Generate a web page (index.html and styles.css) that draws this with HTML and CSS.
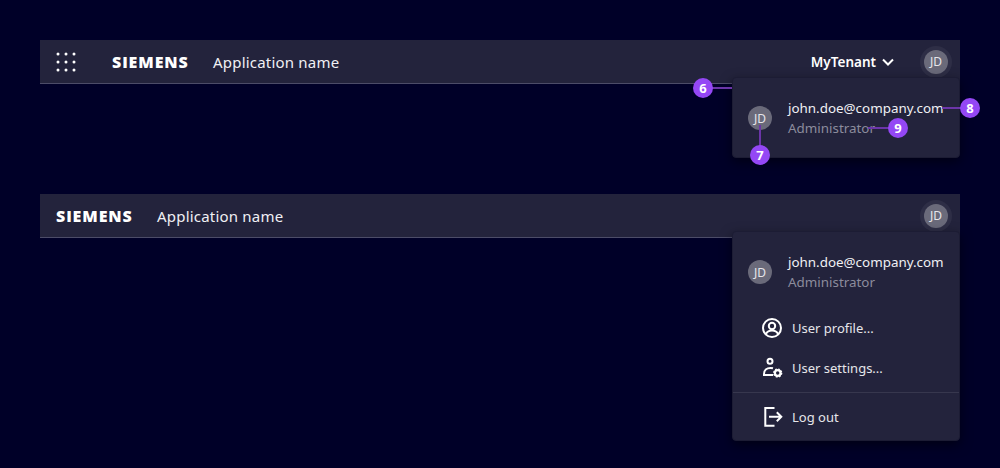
FILE: index.html
```html
<!DOCTYPE html>
<html lang="en">
<head>
    <meta charset="UTF-8">
    <meta name="viewport" content="width=device-width, initial-scale=1.0">
    <title>Application header</title>
    <link rel="stylesheet" href="styles.css">
</head>
<body>
    <section class="app app-first">
        <header class="bar">
            <button class="launcher" aria-label="Launcher">
                <svg width="20" height="20" viewBox="0 0 20 20" fill="#fff">
                    <circle cx="2" cy="2" r="1.5"/><circle cx="10" cy="2" r="1.5"/><circle cx="18" cy="2" r="1.5"/>
                    <circle cx="2" cy="10" r="1.5"/><circle cx="10" cy="10" r="1.5"/><circle cx="18" cy="10" r="1.5"/>
                    <circle cx="2" cy="18" r="1.5"/><circle cx="10" cy="18" r="1.5"/><circle cx="18" cy="18" r="1.5"/>
                </svg>
            </button>
            <span class="logo">SIEMENS</span>
            <span class="app-name">Application name</span>
            <span class="tenant">MyTenant
                <svg width="12" height="8" viewBox="0 0 12 8" fill="none" stroke="#fff" stroke-width="2"><path d="M1 1.500l5 5 5-5"/></svg>
            </span>
            <span class="avatar-ring"><span class="avatar">JD</span></span>
        </header>

        <div class="menu">
            <div class="identity">
                <span class="avatar">JD</span>
                <div class="who">
                    <div class="email">john.doe@company.com</div>
                    <div class="role">Administrator</div>
                </div>
            </div>
        </div>

        <!-- callouts -->
        <span class="line line-6"></span><span class="pin pin-6">6</span>
        <span class="line line-7"></span><span class="pin pin-7">7</span>
        <span class="line line-8"></span><span class="pin pin-8">8</span>
        <span class="line line-9"></span><span class="pin pin-9">9</span>
    </section>

    <section class="app app-second">
        <header class="bar bar-plain">
            <span class="logo">SIEMENS</span>
            <span class="app-name">Application name</span>
            <span class="avatar-ring"><span class="avatar">JD</span></span>
        </header>

        <div class="menu">
            <div class="identity">
                <span class="avatar">JD</span>
                <div class="who">
                    <div class="email">john.doe@company.com</div>
                    <div class="role">Administrator</div>
                </div>
            </div>
            <div class="item">
                <svg width="24" height="24" viewBox="0 0 24 24" fill="none" stroke="#fff" stroke-width="2">
                    <circle cx="12" cy="12" r="9"/>
                    <circle cx="12" cy="10" r="3.200"/>
                    <path d="M5.800 18.400c1-2.600 3.200-3.900 6.200-3.900s5.200 1.300 6.200 3.900"/>
                </svg>
                <span>User profile...</span>
            </div>
            <div class="item">
                <svg width="24" height="24" viewBox="0 0 24 24" fill="none" stroke="#fff" stroke-width="2">
                    <circle cx="10" cy="5.300" r="2.500"/>
                    <path d="M13 12.200c-.8-.2-1.600-.3-2.500-.3-3.800 0-6.500 2.300-6.500 6.100v1h9"/>
                    <circle cx="17.700" cy="17" r="2.800" stroke-width="2.200"/>
                    <circle cx="17.700" cy="17" r="3.900" stroke-width="1.500" stroke-dasharray="1.700 1.360"/>
                </svg>
                <span>User settings...</span>
            </div>
            <div class="divider"></div>
            <div class="item">
                <svg width="24" height="24" viewBox="0 0 24 24" fill="none" stroke="#fff" stroke-width="2">
                    <path d="M14.500 3H5.300v17.700h9.200"/>
                    <path d="M9 11.700h12.500M16.800 7.200l4.500 4.500-4.500 4.500"/>
                </svg>
                <span>Log out</span>
            </div>
        </div>
    </section>
</body>
</html>
```

FILE: styles.css
```css
* {
    box-sizing: border-box;
}
body {
    margin: 0;
    padding: 40px 40px 0;
    background-color: #000028;
    font-family: "Noto Sans", sans-serif;
    color: #f5f5f5;
}
.app {
    position: relative;
}
.app-first {
    height: 154px;
}
.app-second {
    height: 274px;
}
.bar {
    display: flex;
    align-items: center;
    height: 44px;
    padding-right: 8px;
    background-color: #23233c;
    border-bottom: 1px solid #4c4c68;
}
.bar-plain {
    padding-left: 16px;
}
.launcher {
    display: flex;
    align-items: center;
    justify-content: center;
    width: 52px;
    height: 43px;
    padding: 0;
    margin-right: 20px;
    background: none;
    border: none;
}
.logo {
    font-family: "Open Sans", sans-serif;
    font-size: 16px;
    font-weight: 800;
    letter-spacing: 0.9px;
    color: #fff;
    width: 77px;
    margin-right: 24px;
    white-space: nowrap;
}
.app-name {
    font-size: 15px;
    color: #f0f0f4;
    letter-spacing: 0.2px;
}
.tenant {
    display: flex;
    align-items: center;
    gap: 6px;
    margin-left: auto;
    margin-right: 26px;
    font-size: 13.500px;
    font-weight: 600;
    color: #fff;
}
.avatar-ring {
    display: flex;
    align-items: center;
    justify-content: center;
    width: 32px;
    height: 32px;
    border-radius: 50%;
    background-color: #2e2e46;
}
.bar-plain .avatar-ring {
    margin-left: auto;
}
.avatar {
    display: flex;
    align-items: center;
    justify-content: center;
    flex: none;
    width: 24px;
    height: 24px;
    border-radius: 50%;
    background-color: #6a6a7a;
    color: #e6e6ea;
    font-size: 12px;
}
.menu {
    position: absolute;
    top: 37px;
    right: 0;
    width: 228px;
    padding: 4px 0 3px;
    background-color: #23233c;
    border: 1px solid #1c1c34;
    border-radius: 4px;
    box-shadow: 0 4px 12px rgba(0,0,0,0.5);
}
.identity {
    display: flex;
    align-items: center;
    gap: 16px;
    height: 72px;
    padding-left: 15px;
}
.who {
    font-size: 13.400px;
    line-height: 20px;
}
.email {
    color: #f0f0f4;
}
.role {
    color: #8c8c9c;
}
.item {
    display: flex;
    align-items: center;
    gap: 8px;
    height: 40px;
    padding-left: 27px;
    font-size: 13px;
    color: #e6e6ea;
}
.item svg {
    flex: none;
}
.divider {
    height: 1px;
    margin: 4px 0;
    background-color: #37374e;
}
.pin {
    position: absolute;
    display: flex;
    align-items: center;
    justify-content: center;
    width: 20px;
    height: 20px;
    border-radius: 50%;
    background-color: #9447f5;
    color: #fff;
    font-size: 13px;
    font-weight: 700;
}
.line {
    position: absolute;
    background-color: #6b35a8;
}
.pin-6 { left: 653px; top: 38px; }
.pin-7 { left: 710px; top: 105px; }
.pin-8 { left: 920px; top: 58px; }
.pin-9 { left: 848px; top: 78px; }
.line-6 { left: 672px; top: 47px; width: 20px; height: 2px; }
.line-7 { left: 719px; top: 85px; width: 2px; height: 21px; }
.line-8 { left: 902px; top: 67px; width: 19px; height: 2px; }
.line-9 { left: 828px; top: 87px; width: 21px; height: 2px; }
```
